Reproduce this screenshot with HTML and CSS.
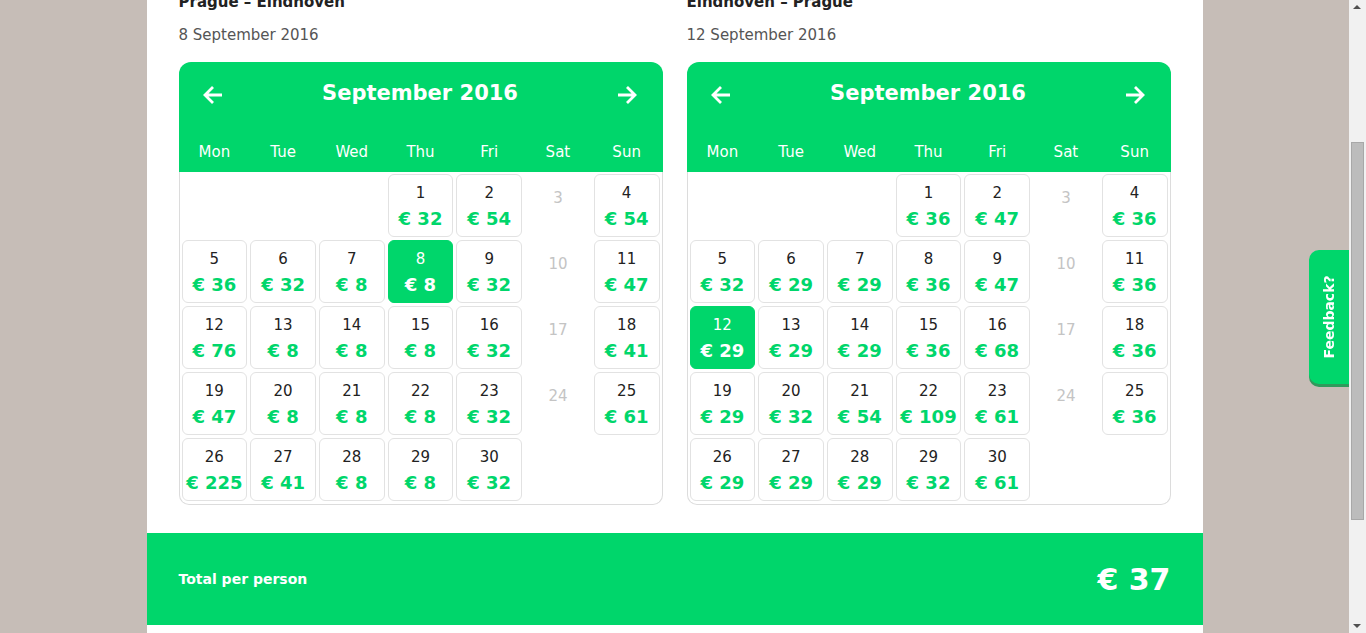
FILE: index.html
```html
<!DOCTYPE html>
<html>
<head>
<meta charset="utf-8">
<link rel="stylesheet" href="styles.css">
</head>
<body>
<div class="page">
  <div class="viewport">
    <div class="panel">
      <div class="trips">
        <div class="trip">
          <div class="route">Prague – Eindhoven</div>
          <div class="date">8 September 2016</div>
          <div class="cal">
            <div class="cal-head">
              <div class="month-row">
                <svg class="arrow" viewBox="0 0 24 24"><path d="M21 12H4M12 4l-8 8 8 8"/></svg>
                <div class="month">September 2016</div>
                <svg class="arrow" viewBox="0 0 24 24"><path d="M3 12h17M12 4l8 8-8 8"/></svg>
              </div>
              <div class="weekdays"><span>Mon</span><span>Tue</span><span>Wed</span><span>Thu</span><span>Fri</span><span>Sat</span><span>Sun</span></div>
            </div>
            <div class="cal-body">
              <div class="day empty"></div><div class="day empty"></div><div class="day empty"></div>
              <div class="day"><div class="num">1</div><div class="price">€ 32</div></div>
              <div class="day"><div class="num">2</div><div class="price">€ 54</div></div>
              <div class="day off"><div class="num">3</div></div>
              <div class="day"><div class="num">4</div><div class="price">€ 54</div></div>

              <div class="day"><div class="num">5</div><div class="price">€ 36</div></div>
              <div class="day"><div class="num">6</div><div class="price">€ 32</div></div>
              <div class="day"><div class="num">7</div><div class="price">€ 8</div></div>
              <div class="day selected"><div class="num">8</div><div class="price">€ 8</div></div>
              <div class="day"><div class="num">9</div><div class="price">€ 32</div></div>
              <div class="day off"><div class="num">10</div></div>
              <div class="day"><div class="num">11</div><div class="price">€ 47</div></div>

              <div class="day"><div class="num">12</div><div class="price">€ 76</div></div>
              <div class="day"><div class="num">13</div><div class="price">€ 8</div></div>
              <div class="day"><div class="num">14</div><div class="price">€ 8</div></div>
              <div class="day"><div class="num">15</div><div class="price">€ 8</div></div>
              <div class="day"><div class="num">16</div><div class="price">€ 32</div></div>
              <div class="day off"><div class="num">17</div></div>
              <div class="day"><div class="num">18</div><div class="price">€ 41</div></div>

              <div class="day"><div class="num">19</div><div class="price">€ 47</div></div>
              <div class="day"><div class="num">20</div><div class="price">€ 8</div></div>
              <div class="day"><div class="num">21</div><div class="price">€ 8</div></div>
              <div class="day"><div class="num">22</div><div class="price">€ 8</div></div>
              <div class="day"><div class="num">23</div><div class="price">€ 32</div></div>
              <div class="day off"><div class="num">24</div></div>
              <div class="day"><div class="num">25</div><div class="price">€ 61</div></div>

              <div class="day"><div class="num">26</div><div class="price">€ 225</div></div>
              <div class="day"><div class="num">27</div><div class="price">€ 41</div></div>
              <div class="day"><div class="num">28</div><div class="price">€ 8</div></div>
              <div class="day"><div class="num">29</div><div class="price">€ 8</div></div>
              <div class="day"><div class="num">30</div><div class="price">€ 32</div></div>
            </div>
          </div>
        </div>

        <div class="trip">
          <div class="route">Eindhoven – Prague</div>
          <div class="date">12 September 2016</div>
          <div class="cal">
            <div class="cal-head">
              <div class="month-row">
                <svg class="arrow" viewBox="0 0 24 24"><path d="M21 12H4M12 4l-8 8 8 8"/></svg>
                <div class="month">September 2016</div>
                <svg class="arrow" viewBox="0 0 24 24"><path d="M3 12h17M12 4l8 8-8 8"/></svg>
              </div>
              <div class="weekdays"><span>Mon</span><span>Tue</span><span>Wed</span><span>Thu</span><span>Fri</span><span>Sat</span><span>Sun</span></div>
            </div>
            <div class="cal-body">
              <div class="day empty"></div><div class="day empty"></div><div class="day empty"></div>
              <div class="day"><div class="num">1</div><div class="price">€ 36</div></div>
              <div class="day"><div class="num">2</div><div class="price">€ 47</div></div>
              <div class="day off"><div class="num">3</div></div>
              <div class="day"><div class="num">4</div><div class="price">€ 36</div></div>

              <div class="day"><div class="num">5</div><div class="price">€ 32</div></div>
              <div class="day"><div class="num">6</div><div class="price">€ 29</div></div>
              <div class="day"><div class="num">7</div><div class="price">€ 29</div></div>
              <div class="day"><div class="num">8</div><div class="price">€ 36</div></div>
              <div class="day"><div class="num">9</div><div class="price">€ 47</div></div>
              <div class="day off"><div class="num">10</div></div>
              <div class="day"><div class="num">11</div><div class="price">€ 36</div></div>

              <div class="day selected"><div class="num">12</div><div class="price">€ 29</div></div>
              <div class="day"><div class="num">13</div><div class="price">€ 29</div></div>
              <div class="day"><div class="num">14</div><div class="price">€ 29</div></div>
              <div class="day"><div class="num">15</div><div class="price">€ 36</div></div>
              <div class="day"><div class="num">16</div><div class="price">€ 68</div></div>
              <div class="day off"><div class="num">17</div></div>
              <div class="day"><div class="num">18</div><div class="price">€ 36</div></div>

              <div class="day"><div class="num">19</div><div class="price">€ 29</div></div>
              <div class="day"><div class="num">20</div><div class="price">€ 32</div></div>
              <div class="day"><div class="num">21</div><div class="price">€ 54</div></div>
              <div class="day"><div class="num">22</div><div class="price">€ 109</div></div>
              <div class="day"><div class="num">23</div><div class="price">€ 61</div></div>
              <div class="day off"><div class="num">24</div></div>
              <div class="day"><div class="num">25</div><div class="price">€ 36</div></div>

              <div class="day"><div class="num">26</div><div class="price">€ 29</div></div>
              <div class="day"><div class="num">27</div><div class="price">€ 29</div></div>
              <div class="day"><div class="num">28</div><div class="price">€ 29</div></div>
              <div class="day"><div class="num">29</div><div class="price">€ 32</div></div>
              <div class="day"><div class="num">30</div><div class="price">€ 61</div></div>
            </div>
          </div>
        </div>
      </div>
      <div class="total">
        <div class="total-label">Total per person</div>
        <div class="total-amount">€ 37</div>
      </div>
    </div>
  </div>
  <div class="scrollbar">
    <div class="sb-up"></div>
    <div class="sb-thumb"></div>
    <div class="sb-down"></div>
  </div>
</div>
<div class="feedback"><span>Feedback?</span></div>
</body>
</html>
```
FILE: styles.css
```css
html, body {
  margin: 0;
  padding: 0;
  height: 100%;
  overflow: hidden;
}
body {
  background: #c6bdb7;
  font-family: "DejaVu Sans", "Liberation Sans", sans-serif;
  color: #222;
}
.page {
  display: flex;
  height: 100vh;
}
.viewport {
  flex: 1;
  display: flex;
  justify-content: center;
  overflow: hidden;
}
.panel {
  width: 1056px;
  background: #fff;
  margin-top: -8px;
  display: flex;
  flex-direction: column;
  height: 700px;
}
.trips {
  display: flex;
  gap: 24px;
  padding: 0 32px;
}
.trip {
  width: 484px;
}
.route {
  font-size: 15px;
  font-weight: 700;
  line-height: 20px;
  color: #222;
}
.date {
  margin-top: 13px;
  font-size: 15px;
  line-height: 20px;
  color: #555;
}
.cal {
  margin-top: 17px;
}
.cal-head {
  background: #00d66b;
  border-radius: 12px 12px 0 0;
  color: #fff;
}
.month-row {
  height: 62px;
  display: flex;
  align-items: center;
  justify-content: space-between;
  padding: 0 23px 0 22px;
}
.month {
  font-size: 21px;
  font-weight: 700;
  line-height: 26px;
  margin-top: 0;
}
.arrow {
  width: 24px;
  height: 24px;
  margin-top: 4px;
  fill: none;
  stroke: #fff;
  stroke-width: 2.8;
}
.weekdays {
  height: 48px;
  display: grid;
  grid-template-columns: repeat(7, 1fr);
  column-gap: 3px;
  padding: 0 3px;
  box-sizing: border-box;
}
.weekdays span {
  text-align: center;
  font-size: 15px;
  line-height: 20px;
  padding-top: 18px;
}
.cal-body {
  border: 1px solid #dcdcdc;
  border-top: none;
  border-radius: 0 0 10px 10px;
  padding: 2px 2px 3px;
  display: grid;
  grid-template-columns: repeat(7, 1fr);
  grid-auto-rows: 63px;
  gap: 3px;
}
.day {
  border: 1px solid #e2e2e2;
  border-radius: 6px;
  text-align: center;
  padding-top: 9px;
  box-sizing: border-box;
}
.day.empty {
  border-color: transparent;
}
.day.off {
  border-color: transparent;
  color: #c4c4c4;
  padding-top: 14px;
}
.num {
  font-size: 15px;
  line-height: 18px;
  color: #222;
}
.day.off .num {
  color: #c4c4c4;
}
.price {
  margin-top: 5px;
  font-size: 18px;
  line-height: 24px;
  font-weight: 700;
  color: #00d66b;
}
.day.selected {
  background: #00d66b;
  border-color: #00d66b;
}
.day.selected .num,
.day.selected .price {
  color: #fff;
}
.total {
  margin-top: 28px;
  height: 92px;
  background: #00d66b;
  color: #fff;
  display: flex;
  align-items: center;
  justify-content: space-between;
  padding: 0 32px;
}
.total-label {
  font-size: 14px;
  font-weight: 700;
}
.total-amount {
  font-size: 30px;
  font-weight: 700;
}
.scrollbar {
  width: 17px;
  background: #f1f1f1;
  position: relative;
}
.sb-thumb {
  position: absolute;
  left: 2px;
  right: 2px;
  top: 142px;
  height: 378px;
  background: #bcbcbc;
  border: 1px solid #a8a8a8;
  box-sizing: border-box;
}
.sb-up, .sb-down {
  position: absolute;
  left: 4px;
  width: 0;
  height: 0;
  border-left: 4px solid transparent;
  border-right: 4px solid transparent;
}
.sb-up {
  top: 5px;
  border-bottom: 4px solid #505050;
}
.sb-down {
  bottom: 5px;
  border-top: 4px solid #505050;
}
.feedback {
  position: fixed;
  right: 17px;
  top: 250px;
  width: 40px;
  height: 134px;
  background: #00d66b;
  border-radius: 10px 0 0 10px;
  box-shadow: 0 3px 0 #2f9a5c;
  display: flex;
  align-items: center;
  justify-content: center;
}
.feedback span {
  transform: rotate(-90deg);
  color: #fff;
  font-weight: 700;
  font-size: 14px;
  white-space: nowrap;
}
```
